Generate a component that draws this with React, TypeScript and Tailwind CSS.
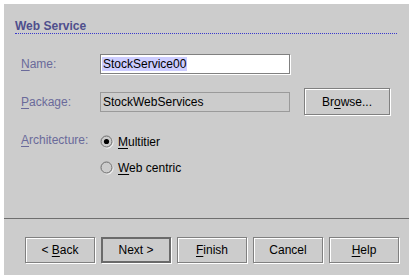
const etched = "border border-[#808080] shadow-[inset_1px_1px_0_#fff,1px_1px_0_#fff]"

const U = ({ children }: { children: string }) => (
	<span className="underline underline-offset-2">{children}</span>
)

const Radio = ({ checked }: { checked?: boolean }) => (
	<svg width="14" height="14" viewBox="0 0 14 14" className="shrink-0">
		<circle cx="7.5" cy="7.5" r="5.5" fill="none" stroke="#ffffff" />
		<circle cx="6.5" cy="6.5" r="5.5" fill="#cccccc" stroke="#6b6b6b" />
		{checked && <circle cx="6.5" cy="6.5" r="2.6" fill="#000000" />}
	</svg>
)

const WizButton = ({
	children,
	isDefault,
}: {
	children: React.ReactNode
	isDefault?: boolean
}) => (
	<div
		className={
			isDefault
				? "flex h-[26px] w-[70px] items-center justify-center border-2 border-[#6a6a6a] shadow-[1px_1px_0_#fff]"
				: `flex h-[26px] w-[70px] items-center justify-center ${etched}`
		}
	>
		{children}
	</div>
)

export default function App() {
	return (
		<div className="flex h-[280px] w-[414px] bg-white pt-1 pr-[5px] pb-[5px] pl-1 font-['Liberation_Sans',Arial,sans-serif] text-[12px] text-black">
			<div className="flex flex-1 flex-col bg-[#cccccc]">
				{/* TITLE */}
				<div className="mt-[15px] mr-[12px] ml-[11px] h-[15px] border-b border-dotted border-[#3a3acc] text-[12px] leading-[14px] font-bold text-[#4f4f8c]">
					Web Service
				</div>

				{/* NAME */}
				<div className="mt-[20px] flex h-[20px] items-center pl-[17px]">
					<span className="w-[79px] text-[#6a6a9a]">
						<U>N</U>ame:
					</span>
					<div className={`flex h-[20px] w-[190px] items-center bg-white pl-[1px] ${etched} shadow-[1px_1px_0_#fff]`}>
						<span className="bg-[#ccccff] px-[1px] leading-[14px]">StockService00</span>
					</div>
				</div>

				{/* PACKAGE */}
				<div className="mt-[14px] flex h-[27px] items-center pl-[17px]">
					<span className="w-[79px] text-[#6a6a9a]">
						<U>P</U>ackage:
					</span>
					<div className="flex h-[20px] w-[190px] items-center border border-[#9a9a9a] pl-[2px]">
						StockWebServices
					</div>
					<div className={`ml-[14px] flex h-[27px] w-[86px] items-center justify-center ${etched}`}>
						Br<U>o</U>wse...
					</div>
				</div>

				{/* ARCHITECTURE */}
				<div className="mt-[17px] flex pl-[17px]">
					<span className="flex h-[20px] w-[79px] items-center pb-[4px] text-[#6a6a9a]">
						<span>
							<U>A</U>rchitecture:
						</span>
					</span>
					<div className="flex flex-col gap-[6px]">
						<div className="flex h-[20px] items-center gap-[4px]">
							<Radio checked />
							<span>
								<U>M</U>ultitier
							</span>
						</div>
						<div className="flex h-[20px] items-center gap-[4px]">
							<Radio />
							<span>
								<U>W</U>eb centric
							</span>
						</div>
					</div>
				</div>

				{/* SEPARATOR */}
				<div className="mt-[40px] h-px bg-[#6e6e6e]" />

				{/* BUTTONS */}
				<div className="mt-[18px] flex gap-[6px] pl-[21px]">
					<WizButton>
						&lt;&nbsp;<U>B</U>ack
					</WizButton>
					<WizButton isDefault>Next &gt;</WizButton>
					<WizButton>
						<U>F</U>inish
					</WizButton>
					<WizButton>Cancel</WizButton>
					<WizButton>
						<U>H</U>elp
					</WizButton>
				</div>
			</div>
		</div>
	)
}
